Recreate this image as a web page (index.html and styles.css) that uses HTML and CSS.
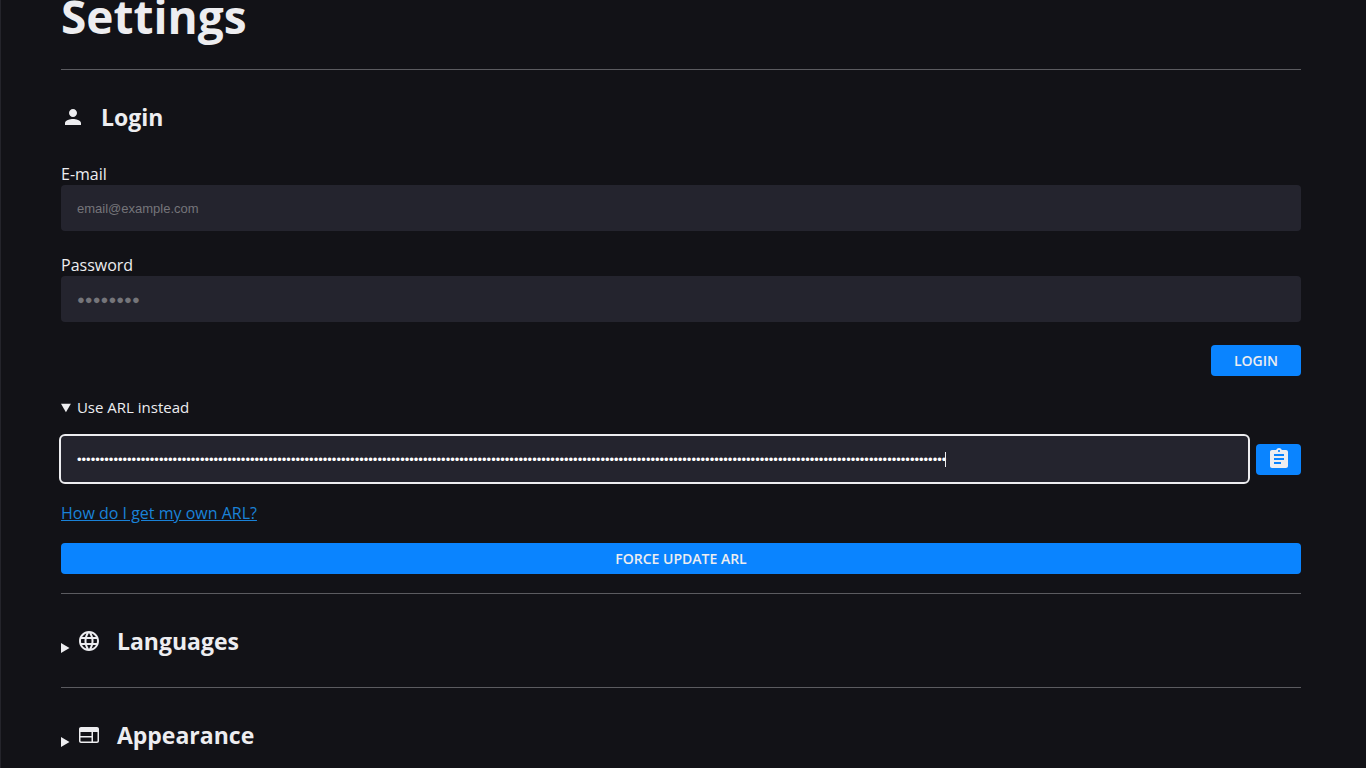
FILE: index.html
```html
<!DOCTYPE html>
<html lang="en">
  <head>
    <meta charset="UTF-8" />
    <meta name="viewport" content="width=device-width, initial-scale=1.0" />
    <title>Settings</title>
    <link rel="stylesheet" href="styles.css">
  </head>
  <body>
    <main class="settings">
      <h1>Settings</h1>

      <!-- Login -->
      <section class="settings-group">
        <h2 class="group-title">
          <svg class="icon" viewBox="0 0 24 24" aria-hidden="true">
            <path d="M12 12c2.21 0 4-1.79 4-4s-1.79-4-4-4-4 1.79-4 4 1.79 4 4 4zm0 2c-2.67 0-8 1.34-8 4v2h16v-2c0-2.66-5.33-4-8-4z" />
          </svg>
          Login
        </h2>

        <form class="login-form" onsubmit="return false">
          <label for="email">E-mail</label>
          <input type="text" id="email" placeholder="email@example.com" />
          <label for="password">Password</label>
          <input type="password" id="password" placeholder="●●●●●●●●" />
          <button type="submit" class="btn btn-login">Login</button>
        </form>

        <details class="arl" open>
          <summary>Use ARL instead</summary>
          <div class="arl-row">
            <div class="arl-field">
              <input type="password" id="arl" aria-label="ARL" autocomplete="off" autofocus />
              <span class="caret"></span>
            </div>
            <button type="button" class="btn btn-paste" aria-label="Paste">
              <svg class="icon" viewBox="0 0 24 24" aria-hidden="true">
                <path d="M19 3h-4.18C14.4 1.84 13.3 1 12 1c-1.3 0-2.4.84-2.82 2H5c-1.1 0-2 .9-2 2v14c0 1.1.9 2 2 2h14c1.1 0 2-.9 2-2V5c0-1.1-.9-2-2-2zm-7 0c.55 0 1 .45 1 1s-.45 1-1 1-1-.45-1-1 .45-1 1-1zm2 14H7v-2h7v2zm3-4H7v-2h10v2zm0-4H7V7h10v2z" />
              </svg>
            </button>
          </div>
          <a class="arl-help" href="#">How do I get my own ARL?</a>
          <button type="button" class="btn btn-update">Force update ARL</button>
        </details>
      </section>

      <!-- Languages -->
      <details class="settings-group">
        <summary class="group-summary">
          <h2 class="group-title">
            <svg class="icon" viewBox="0 0 24 24" aria-hidden="true">
              <path d="M11.99 2C6.47 2 2 6.48 2 12s4.47 10 9.99 10C17.52 22 22 17.52 22 12S17.52 2 11.99 2zm6.93 6h-2.95c-.32-1.25-.78-2.45-1.38-3.56 1.84.63 3.37 1.91 4.33 3.56zM12 4.04c.83 1.2 1.48 2.53 1.91 3.96h-3.82c.43-1.43 1.08-2.76 1.91-3.96zM4.26 14C4.1 13.36 4 12.69 4 12s.1-1.36.26-2h3.38c-.08.66-.14 1.32-.14 2s.06 1.34.14 2H4.26zm.82 2h2.95c.32 1.25.78 2.45 1.38 3.56-1.84-.63-3.37-1.9-4.33-3.56zm2.95-8H5.08c.96-1.66 2.49-2.93 4.33-3.56C8.81 5.55 8.35 6.75 8.03 8zM12 19.96c-.83-1.2-1.48-2.53-1.91-3.96h3.82c-.43 1.43-1.08 2.76-1.91 3.96zM14.34 14H9.66c-.09-.66-.16-1.32-.16-2s.07-1.35.16-2h4.68c.09.65.16 1.32.16 2s-.07 1.34-.16 2zm.25 5.56c.6-1.11 1.06-2.31 1.38-3.56h2.95c-.96 1.65-2.49 2.93-4.33 3.56zM16.36 14c.08-.66.14-1.32.14-2s-.06-1.34-.14-2h3.38c.16.64.26 1.31.26 2s-.1 1.36-.26 2h-3.38z" />
            </svg>
            Languages
          </h2>
        </summary>
      </details>

      <!-- Appearance -->
      <details class="settings-group">
        <summary class="group-summary">
          <h2 class="group-title">
            <svg class="icon" viewBox="0 0 24 24" aria-hidden="true">
              <path fill-rule="evenodd" d="M20 4H4c-1.1 0-2 .9-2 2v12c0 1.1.9 2 2 2h16c1.1 0 2-.9 2-2V6c0-1.1-.9-2-2-2zM3.5 9H14.5V13H3.5zM3.5 14.5H14.5V18.5H4c-.3 0-.5-.2-.5-.5zM16 9H20.5V18c0 .3-.2 .5-.5 .5H16z" />
            </svg>
            Appearance
          </h2>
        </summary>
      </details>
    </main>

    <script>
      const arl = document.getElementById("arl");
      arl.value = "0".repeat(191);
      arl.focus();
      arl.setSelectionRange(191, 191);
    </script>
  </body>
</html>
```
FILE: styles.css
```css
* {
  box-sizing: border-box;
}
body {
  margin: 0;
  min-height: 100vh;
  border-left: 1px solid #24242b;
  background-color: #121217;
  color: #ededf0;
  font-family: "Open Sans", sans-serif;
  font-size: 16px;
  line-height: 22px;
  overflow-x: hidden;
}
.settings {
  padding: 0 65px 0 60px;
}
/* the page title sits partly under the top edge */
h1 {
  margin: -20px 0 17px;
  font-size: 46px;
  line-height: 72px;
}
.settings-group {
  border-top: 1px solid #5b5b60;
}
.group-title {
  display: flex;
  align-items: center;
  gap: 16px;
  margin: 29px 0 28px;
  font-size: 23px;
  line-height: 36px;
}
.icon {
  width: 24px;
  height: 24px;
  fill: currentColor;
}
.login-form {
  display: flex;
  flex-direction: column;
}
input {
  width: 100%;
  height: 46px;
  margin: 0;
  padding: 0 16px;
  border: none;
  border-radius: 4px;
  background-color: #24242e;
  color: #fff;
  font-family: "Liberation Sans", sans-serif;
  font-size: 13px;
}
input::placeholder {
  color: #75757a;
}
.login-form input {
  margin-bottom: 23px;
}
.btn {
  display: flex;
  align-items: center;
  justify-content: center;
  height: 31px;
  padding: 0 23px;
  border: none;
  border-radius: 4px;
  background-color: #0a84ff;
  color: #ededf0;
  font-family: inherit;
  font-size: 14px;
  font-weight: 600;
  text-transform: uppercase;
  cursor: pointer;
}
.btn-login {
  align-self: flex-end;
}
summary {
  font-size: 15px;
}
.arl summary {
  margin: 20px 0 18px;
}
.arl-row {
  display: flex;
  align-items: center;
  gap: 8px;
}
.arl-field {
  position: relative;
  display: flex;
  flex: 1;
}
#arl {
  caret-color: transparent;
}
#arl:focus {
  outline: 2px solid #ededf0;
}
.caret {
  position: absolute;
  top: 16px;
  left: 884px;
  width: 1px;
  height: 15px;
  background-color: #ededf0;
}
.btn-paste {
  flex: none;
  width: 45px;
  padding: 0;
}
.arl-help {
  display: inline-block;
  margin: 20px 0 19px;
  color: #1a82d8;
}
.btn-update {
  width: 100%;
  margin-bottom: 19px;
}
.group-summary .group-title {
  display: inline-flex;
}
```
